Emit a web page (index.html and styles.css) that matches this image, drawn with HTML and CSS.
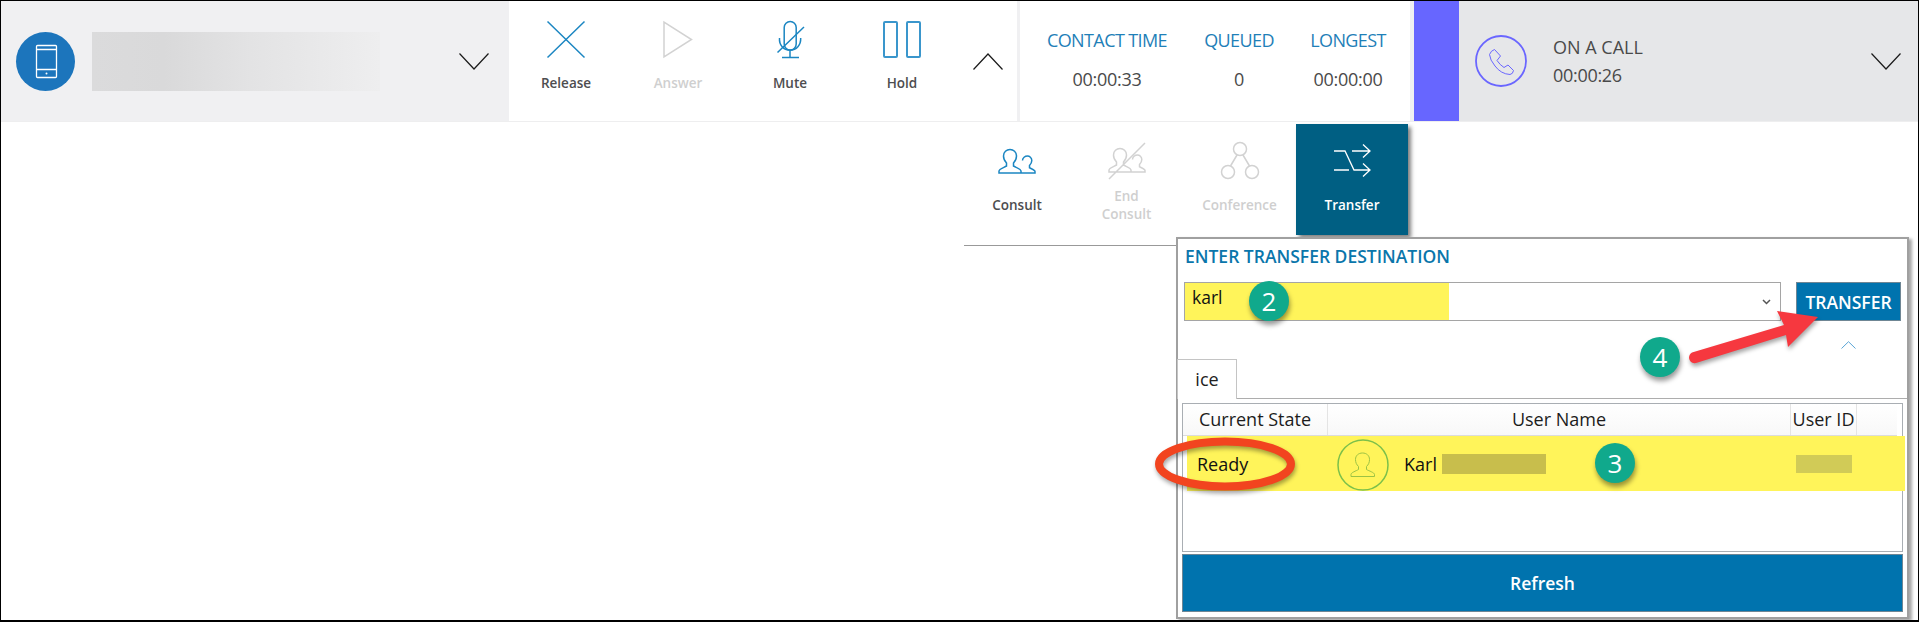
FILE: index.html
```html
<!DOCTYPE html>
<html lang="en">
<head>
<meta charset="utf-8">
<title>Transfer</title>
<link rel="stylesheet" href="styles.css">
</head>
<body>
<div class="frame">
  <header class="bar">
    <section class="agent">
      <svg class="agent-icon" width="59" height="59" viewBox="0 0 59 59"><circle class="fill-blue" cx="29.5" cy="29.5" r="29.5"/><rect class="st-white" x="20.5" y="13.5" width="20" height="32" rx="1"/><path class="st-white" d="M20.5 17.5h20M20.5 37.5h20"/><circle class="fill-white" cx="30.5" cy="41.5" r="1"/></svg>
      <div class="blur-name"></div>
      <svg class="chev" width="30" height="17" viewBox="0 0 30 17"><path class="st-dark" d="M0.5 0.5L15 16L29.5 0.5"/></svg>
    </section>
    <section class="actions">
      <div class="action">
        <svg width="38" height="37" viewBox="0 0 38 37"><path class="st-blue" d="M0.5 0.5L37.5 36.5M37.5 0.5L0.5 36.5"/></svg>
        <span class="label">Release</span>
      </div>
      <div class="action off">
        <svg width="30" height="37" viewBox="0 0 30 37"><path class="st-gray" d="M1 1V36L28.5 18.5Z"/></svg>
        <span class="label">Answer</span>
      </div>
      <div class="action">
        <svg width="38" height="37" viewBox="0 6 38 37"><rect class="st-blue" x="13.2" y="6.5" width="12" height="28.5" rx="6"/><path class="st-blue" d="M8.5 23C8 30 12.5 35.2 19 35.2S30 30 29.7 23M19 35.2V42.3M11 42.4H28M6.5 37.5L33 12"/></svg>
        <span class="label">Mute</span>
      </div>
      <div class="action">
        <svg width="38" height="37" viewBox="0 0 38 37"><rect class="st-blue2" x="1" y="1" width="13" height="35" rx="1"/><rect class="st-blue2" x="24" y="1" width="13" height="35" rx="1"/></svg>
        <span class="label">Hold</span>
      </div>
      <svg class="chev-up" width="30" height="17" viewBox="0 0 30 17"><path class="st-dark" d="M0.5 16.5L15 1L29.5 16.5"/></svg>
    </section>
    <section class="stats">
      <div class="stat stat-a"><span class="stat-label">CONTACT TIME</span><span class="stat-value">00:00:33</span></div>
      <div class="stat stat-b"><span class="stat-label">QUEUED</span><span class="stat-value">0</span></div>
      <div class="stat stat-c"><span class="stat-label">LONGEST</span><span class="stat-value">00:00:00</span></div>
    </section>
    <div class="accent"></div>
    <section class="state">
      <svg class="state-icon" width="52" height="52" viewBox="0 0 52 52"><circle class="st-violet" cx="26" cy="26" r="25"/><path class="st-violet-thin" d="M14.5 19.5Q16 15.5 19.5 14.5L25.5 21L22 25.5Q25 30 29 32.5L33 30L38.5 35.5Q38 39 35 39.5Q26 39 20 31Q15 25 14.5 19.5Z"/></svg>
      <div class="state-text"><span class="state-name">ON A CALL</span><span>00:00:26</span></div>
      <svg class="chev-end" width="30" height="17" viewBox="0 0 30 17"><path class="st-dark" d="M0.5 0.5L15 16L29.5 0.5"/></svg>
    </section>
  </header>

  <nav class="subbar">
    <div class="sub sub-a">
      <svg width="38" height="26" viewBox="0 0 38 26"><path class="st-blue" d="M1 25V23C1 21 6 19.500 8.500 18V15C6.500 13 5.500 11 5.500 8C5.500 4 8.500 1.500 12 1.500S18.500 4 18.500 8C18.500 11 17.500 13 15.500 15V18C18 19.500 23 21 23 23V25ZM21 25H37V23.500C37 22 34 21 31.500 19.800V17.500C33 16 33.800 14.500 33.800 12.500C33.800 9.800 31.500 8 29.500 8C27 8 24.500 9.800 24.500 12.500"/></svg>
      <span class="label">Consult</span>
    </div>
    <div class="sub sub-b off">
      <svg width="38" height="38" viewBox="0 0 38 38"><path class="st-gray" d="M1 37L37 1M1 30V28C1 26 6 24.500 8.500 23V20C6.500 18 5.500 16 5.500 13C5.500 9 8.500 6.500 12 6.500S18.500 9 18.500 13C18.500 16 17.500 18 15.500 20V23C18 24.500 23 26 23 28V30ZM21 30H37V28.500C37 27 34 26 31.500 24.800V22.500C33 21 33.800 19.500 33.800 17.500C33.800 14.800 31.500 13 29.500 13C27 13 24.500 14.800 24.500 17.500"/></svg>
      <span class="label">End<br>Consult</span>
    </div>
    <div class="sub sub-c off">
      <svg width="38" height="38" viewBox="0 0 38 38"><circle class="st-gray" cx="19" cy="7" r="6.500"/><circle class="st-gray" cx="7" cy="30" r="6.500"/><circle class="st-gray" cx="31" cy="30" r="6.500"/><path class="st-gray" d="M16 13L9.500 24M22 13L28.500 24"/></svg>
      <span class="label">Conference</span>
    </div>
    <div class="sub sub-d">
      <svg width="38" height="34" viewBox="0 0 38 34"><path class="st-white" d="M1 7H12L21 26H37M1 26H16M19 7H37M30 0.500L37 7L30 13.500M30 19.500L37 26L30 32.500"/></svg>
      <span class="label">Transfer</span>
    </div>
  </nav>

  <aside class="panel">
    <h2 class="panel-title">ENTER TRANSFER DESTINATION</h2>
    <div class="dest-row">
      <div class="combo">
        <span class="combo-text">karl</span>
        <svg class="combo-arrow" width="9" height="6" viewBox="0 0 9 6"><path class="st-combo" d="M1 1L4.500 4.500L8 1"/></svg>
      </div>
      <button class="transfer-btn" type="button">TRANSFER</button>
    </div>
    <div class="collapse-row">
      <svg width="15" height="8" viewBox="0 0 15 8"><path class="st-light" d="M0.500 7.500L7.500 0.700L14.500 7.500"/></svg>
    </div>
    <div class="tabs"><span class="tab">ice</span></div>
    <div class="grid">
      <div class="grid-head">
        <span class="col col-state">Current State</span>
        <span class="col col-name">User Name</span>
        <span class="col col-id">User ID</span>
        <span class="col col-rest"></span>
      </div>
      <div class="grid-row">
        <span class="cell-state">Ready</span>
        <div class="cell-name">
          <svg class="avatar" width="52" height="52" viewBox="0 0 52 52"><circle class="st-green" cx="26" cy="26" r="25"/><path class="st-green-thin" d="M14 37.500V35.500C14 33.500 19 32 21.500 30.500V27.500C19.500 25.500 18.500 23.500 18.500 20.500C18.500 16.500 21.500 14 25.500 14S32.500 16.500 32.500 20.500C32.500 23.500 31.500 25.500 29.500 27.500V30.500C32 32 37.500 33.500 37.500 35.500V37.500Z"/></svg>
          <span class="karl">Karl</span>
          <span class="blur-surname"></span>
        </div>
        <span class="blur-id"></span>
      </div>
    </div>
    <button class="refresh" type="button">Refresh</button>
  </aside>

  <svg class="marks" width="1919" height="622" viewBox="0 0 1919 622">
    <ellipse class="mark-ring" cx="1225" cy="464" rx="66" ry="22.500"/>
    <path class="mark-arrow" d="M1692 352.500L1784 325L1777 311L1818 317L1788 347L1786 335L1696 363Q1690 364 1689 358Q1689 354 1692 352.500Z"/>
  </svg>
  <span class="step step-2">2</span>
  <span class="step step-3">3</span>
  <span class="step step-4">4</span>
</div>
</body>
</html>
```

FILE: styles.css
```css
* { box-sizing: border-box; }
html, body { margin: 0; padding: 0; background: #fff; }
body { font-family: "Open Sans", "Noto Sans", sans-serif; color: #4a4a4a; }
svg { display: block; flex: none; overflow: visible; }

.frame {
  position: relative;
  width: 1919px;
  height: 622px;
  overflow: hidden;
  background: #fff;
  border: solid #000;
  border-width: 1px 1px 2px 1px;
}

.fill-blue { fill: #1c75bc; }
.fill-white { fill: #fff; }
.st-white, .st-dark, .st-blue, .st-blue2, .st-gray, .st-violet, .st-violet-thin, .st-green, .st-green-thin, .st-combo, .st-light { fill: none; }
.st-white { stroke: #fff; stroke-width: 1.300; }
.st-dark { stroke: #1a1a1a; stroke-width: 1.200; }
.st-blue { stroke: #1b86c2; stroke-width: 1.500; }
.st-blue2 { stroke: #3a96cc; stroke-width: 2; }
.st-gray { stroke: #d2d2d2; stroke-width: 1.500; }
.st-violet { stroke: #6a66ff; stroke-width: 1.800; }
.st-violet-thin { stroke: #6a66ff; stroke-width: 1; }
.st-green { stroke: #7cc04a; stroke-width: 1.500; }
.st-green-thin { stroke: #9cc244; stroke-width: 1; }
.st-combo { stroke: #555; stroke-width: 1.500; }
.st-light { stroke: #5aa5d6; stroke-width: 1; }

.bar { display: flex; height: 121px; background: #f0f0f2; border-bottom: 1px solid #eeeeef; }

.agent { display: flex; align-items: center; width: 508px; padding-left: 15px; background: #f0f0f2; }
.blur-name { width: 288px; height: 59px; margin-left: 17px; background: linear-gradient(90deg, #dbdbdc 0%, #d9d9da 25%, #e3e3e4 55%, #eeeeef 100%); }
.agent .chev { margin-left: 79px; }

.actions { position: relative; display: flex; width: 508px; padding-left: 1px; background: #fff; }
.action { display: flex; flex-direction: column; align-items: center; width: 112px; padding-top: 20px; }
.label { font-size: 13.500px; line-height: 18px; font-weight: 600; color: #4d4d4f; text-align: center; }
.action .label { margin-top: 16px; }
.off .label { color: #cfcfcf; }
.chev-up { margin: 52px 0 0 15px; }

.stats { display: flex; width: 390px; margin-left: 3px; padding: 29px 0 0 10px; background: #fff; }
.stat { display: flex; flex-direction: column; align-items: center; gap: 19px; }
.stat-a { width: 154px; }
.stat-b { width: 110px; }
.stat-c { width: 108px; }
.stat-label { font-size: 18px; line-height: 20px; color: #1f80b8; letter-spacing: -0.600px; white-space: nowrap; }
.stat-value { font-size: 18px; line-height: 20px; color: #4a4a4a; letter-spacing: -0.300px; }

.accent { width: 45px; margin-left: 4px; background: #6766ff; }

.state { display: flex; flex: 1; align-items: center; padding-left: 16px; background: #e6e7e9; }
.state-text { display: flex; flex-direction: column; gap: 8px; margin-left: 26px; font-size: 18px; line-height: 20px; color: #4a4a4a; letter-spacing: -0.300px; }
.state-name { letter-spacing: 0; font-weight: 500; }
.chev-end { margin: 0 17px 0 auto; }

.subbar { display: flex; width: 445px; height: 122px; margin: 2px 0 0 963px; border-bottom: 1px solid #999; }
.sub { display: flex; flex-direction: column; align-items: center; height: 111px; padding-top: 24px; }
.sub-a { width: 106px; }
.sub-a .label { margin-top: 22px; }
.sub-b { width: 113px; padding-top: 18px; }
.sub-b .label { margin-top: 7px; }
.sub-c { width: 113px; padding-top: 18px; }
.sub-c .label { margin-top: 16px; }
.sub-d { width: 112px; padding-top: 20px; background: #005f83; box-shadow: 3px 3px 4px rgba(0, 0, 0, 0.5); }
.sub-d .label { margin-top: 18px; color: #fff; }

.panel {
  position: absolute;
  left: 1175px;
  top: 236px;
  width: 733px;
  height: 382px;
  background: #fff;
  border: 2px solid #a0a0a0;
  box-shadow: 3px 2px 3px rgba(0, 0, 0, 0.35);
}
.panel-title { margin: 0; padding: 7px 0 16px 7px; font-size: 17.500px; line-height: 20px; font-weight: 600; color: #0a76ab; white-space: nowrap; }
.dest-row { display: flex; gap: 15px; height: 39px; margin-left: 6px; }
.combo { display: flex; align-items: center; justify-content: space-between; width: 597px; padding: 0 9px 0 7px; border: 1px solid #a5a5a5; background: linear-gradient(90deg, #fff45a 264px, #fff 264px); }
.combo-text { font-size: 17.500px; line-height: 30px; margin-top: -9px; color: #111; }
.transfer-btn { width: 105px; padding: 0; border: 1px solid #6f8694; background: #0073ae; color: #fff; font-family: inherit; font-size: 17.500px; font-weight: 600; white-space: nowrap; }
.collapse-row { display: flex; justify-content: flex-end; height: 38px; padding: 20px 51px 0 0; }
.tabs { display: flex; height: 40px; border-bottom: 1px solid #adadad; }
.tab { width: 60px; height: 40px; margin-left: -1px; border: 1px solid #c4c4c4; border-bottom: 0; background: #fff; font-size: 18px; line-height: 38px; text-align: center; color: #222; }

.grid { width: 721px; height: 149px; margin: 4px 0 0 4px; border: 1px solid #a9aeb3; background: #fff; }
.grid-head { display: flex; height: 32px; border-bottom: 1px solid #dcdcdc; margin: 0 5px 0 0; background: linear-gradient(#fff, #f8f8f8); }
.col { font-size: 18px; line-height: 30px; text-align: center; color: #1c1c1c; border-right: 1px solid #e4e4e4; white-space: nowrap; }
.col-state { width: 145px; }
.col-name { width: 463px; }
.col-id { width: 66px; }
.col-rest { flex: 1; border-right: 0; }

.grid-row { display: flex; align-items: center; width: 718px; height: 55px; margin-left: 4px; background: #fff45a; }
.cell-state { width: 141px; padding-left: 10px; font-size: 18px; color: #111; }
.cell-name { display: flex; align-items: center; width: 468px; padding-left: 9px; }
.avatar { margin-top: 2px; }
.karl { margin-left: 15px; font-size: 18px; color: #111; }
.blur-surname { width: 104px; height: 20px; margin-left: 5px; background: #c8be4c; }
.blur-id { width: 56px; height: 18px; background: #d1cb57; }

.refresh { display: block; width: 721px; height: 58px; margin: 2px 0 0 4px; padding: 0; border: 1px solid #6f8694; background: #0073ae; color: #fff; font-family: inherit; font-size: 17.500px; font-weight: 600; }

.marks { position: absolute; left: -1px; top: -1px; pointer-events: none; filter: drop-shadow(1px 3px 2px rgba(0, 0, 0, 0.35)); }
.mark-ring { fill: none; stroke: #f2441f; stroke-width: 8; }
.mark-arrow { fill: #f6383f; }

.step {
  position: absolute;
  width: 40px;
  height: 40px;
  border-radius: 50%;
  background: #10a98c;
  color: #fff;
  font-size: 26px;
  line-height: 40px;
  text-align: center;
  box-shadow: 1px 4px 5px rgba(0, 0, 0, 0.4);
}
.step-2 { left: 1248px; top: 280px; }
.step-3 { left: 1594px; top: 442px; }
.step-4 { left: 1639px; top: 336px; }
```
